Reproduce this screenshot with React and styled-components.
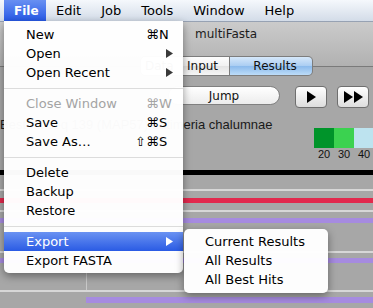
import styled, { createGlobalStyle } from "styled-components";

const GlobalStyle = createGlobalStyle`
  html, body {
    margin: 0;
    padding: 0;
  }
  body {
    width: 373px;
    height: 308px;
    overflow: hidden;
    background: #a7a7a7;
    font-family: "DejaVu Sans", sans-serif;
  }
`;

const Screen = styled.div`
  position: relative;
  width: 373px;
  height: 308px;
  overflow: hidden;
  display: flex;
  flex-direction: column;
  background: #a7a7a7;
`;

/* ---- menu bar ---- */

const MenuBar = styled.div`
  flex: none;
  height: 21px;
  display: flex;
  align-items: stretch;
  padding-left: 4px;
  background: linear-gradient(#f5f8fc, #d3dce8);
  border-bottom: 1px solid #97a2b3;
  font-size: 13px;
`;

const MenuTitle = styled.div`
  display: flex;
  align-items: center;
  box-sizing: border-box;
  width: ${(p) => (p.$width ? `${p.$width}px` : "auto")};
  padding: 0 10px;
  color: ${(p) => (p.$open ? "#fff" : "#000")};
  font-weight: ${(p) => (p.$open ? "bold" : "normal")};
  font-size: ${(p) => (p.$open ? "12px" : "13px")};
  background: ${(p) =>
    p.$open ? "linear-gradient(#6890f2, #2759e6)" : "transparent"};
`;

/* ---- window behind the menu ---- */

const AppWindow = styled.div`
  flex: 1;
  display: flex;
  flex-direction: column;
  background: linear-gradient(#cbcbcb 0, #b1b1b1 44px, #a7a7a7 44px);
`;

const TitleBar = styled.div`
  height: 24px;
  display: flex;
  align-items: center;
  padding-left: 195px;
  font-size: 12px;
  color: #1c1c1c;
`;

const TabRow = styled.div`
  height: 20px;
  margin-top: 10px;
  display: flex;
  align-items: center;
`;

const TabLine = styled.div`
  flex: ${(p) => (p.$grow ? 1 : "none")};
  width: ${(p) => (p.$grow ? "auto" : "140px")};
  height: 1px;
  background: #7a7a7a;
`;

const Segments = styled.div`
  display: flex;
  height: 20px;
`;

const Segment = styled.div`
  box-sizing: border-box;
  width: ${(p) => p.$width}px;
  height: 20px;
  display: flex;
  align-items: center;
  justify-content: ${(p) => (p.$selected ? "center" : "flex-start")};
  padding-left: ${(p) => (p.$selected ? "8px" : "4px")};
  font-size: 12px;
  color: #111;
  border: 1px solid #7d7d7d;
  border-left-width: ${(p) => (p.$first ? "1px" : "0")};
  border-radius: ${(p) =>
    p.$first ? "5px 0 0 5px" : p.$last ? "0 5px 5px 0" : "0"};
  background: ${(p) =>
    p.$selected
      ? "linear-gradient(#d6e8fa 0%, #aacdf2 50%, #8bbaec 51%, #bcdcf8 100%)"
      : "linear-gradient(#fdfdfd 0%, #f1f1f1 50%, #e3e3e3 51%, #f6f6f6 100%)"};
`;

const ControlRow = styled.div`
  margin-top: 10px;
  display: flex;
  align-items: flex-start;
  padding-left: 168px;
`;

const PillButton = styled.div`
  box-sizing: border-box;
  width: 112px;
  height: 19px;
  display: flex;
  align-items: center;
  justify-content: center;
  font-size: 12px;
  color: #111;
  border: 1px solid #808080;
  border-radius: 10px;
  background: linear-gradient(#ffffff, #ececec);
`;

const SquareButton = styled.div`
  box-sizing: border-box;
  width: 32px;
  height: 22px;
  margin-left: ${(p) => p.$gap}px;
  display: flex;
  align-items: center;
  justify-content: center;
  border: 1px solid #6f6f6f;
  border-radius: 4px;
  background: linear-gradient(#ffffff, #dddddd);
`;

const InfoRow = styled.div`
  margin-top: 10px;
  display: flex;
  justify-content: space-between;
  align-items: flex-start;
`;

const InfoText = styled.div`
  height: 26px;
  font-family: "Liberation Sans", Arial, sans-serif;
  font-size: 13px;
  line-height: 13px;
  color: #1a1a1a;
  white-space: nowrap;
`;

const Legend = styled.div`
  margin-top: 10px;
  margin-right: -1px;
  display: grid;
  grid-template-columns: repeat(3, 20px);
`;

const Swatch = styled.div`
  height: 20px;
  background: ${(p) => p.$color};
`;

const SwatchLabel = styled.div`
  height: 12px;
  line-height: 12px;
  text-align: center;
  font-family: "Liberation Sans", Arial, sans-serif;
  font-size: 11px;
  color: #111;
`;

const Tracks = styled.div`
  margin-top: 10px;
  display: flex;
  flex-direction: column;
`;

const TrackBar = styled.div`
  height: ${(p) => p.$h}px;
  margin-top: ${(p) => p.$top || 0}px;
  margin-left: ${(p) => p.$indent || 0}px;
  background: ${(p) => p.$color};
`;

const TrackRule = styled.div`
  height: 2px;
  margin-top: ${(p) => p.$top}px;
  background: #d7d7d7;
`;

const TrackGap = styled.div`
  height: ${(p) => p.$h}px;
  margin-left: 86px;
  border-left: 1px solid #c9c9c9;
`;

/* ---- pulled-down menu ---- */

const DropMenu = styled.div`
  position: absolute;
  top: 21px;
  left: 4px;
  width: 179px;
  padding: 4px 0 3px;
  background: rgba(255, 255, 255, 0.975);
  border-radius: 0 0 5px 5px;
  box-shadow: 0 3px 9px rgba(0, 0, 0, 0.4);
  font-size: 13px;
`;

const SubMenu = styled.div`
  position: absolute;
  top: -3px;
  left: calc(100% + 1px);
  width: 144px;
  padding: 3px 0 4px;
  background: rgba(255, 255, 255, 0.975);
  border-radius: 5px;
  box-shadow: 0 3px 9px rgba(0, 0, 0, 0.4);
`;

const Item = styled.div`
  position: relative;
  height: 19px;
  display: flex;
  align-items: center;
  padding: 0 10px 0 ${(p) => p.$indent || 22}px;
  color: ${(p) => (p.$disabled ? "#a4a4a4" : p.$active ? "#fff" : "#000")};
  background: ${(p) =>
    p.$active ? "linear-gradient(#6a92f2, #2a5be4)" : "none"};
  white-space: nowrap;
`;

const Label = styled.span`
  flex: 1;
`;

const Mods = styled.span`
  text-align: right;
`;

const Key = styled.span`
  width: 14px;
`;

const Separator = styled.div`
  height: 1px;
  margin: 6px 0 5px;
  background: #dcdcdc;
`;

const Arrow = ({ color = "#3a3a3a" }) => (
  <svg width="7" height="9" viewBox="0 0 7 9">
    <polygon points="0,0 7,4.5 0,9" fill={color} />
  </svg>
);

const Play = ({ double }) => (
  <svg width={double ? 19 : 9} height="12" viewBox={double ? "0 0 19 12" : "0 0 9 12"}>
    <polygon points="0,0 9,6 0,12" fill="#000" />
    {double && <polygon points="10,0 19,6 10,12" fill="#000" />}
  </svg>
);

const MenuItem = ({ label, mods, keyName, disabled, submenu, active, children }) => (
  <Item $disabled={disabled} $active={active}>
    <Label>{label}</Label>
    {keyName && (
      <>
        <Mods>{mods}</Mods>
        <Key>{keyName}</Key>
      </>
    )}
    {submenu && <Arrow color={active ? "#fff" : "#3a3a3a"} />}
    {children}
  </Item>
);

const menuBarItems = ["Edit", "Job", "Tools", "Window", "Help"];

const legend = [
  { color: "#00942a", label: "20" },
  { color: "#3bd250", label: "30" },
  { color: "#bde3ef", label: "40" },
];

const App = () => {
  return (
    <Screen>
      <GlobalStyle />
      <MenuBar>
        <MenuTitle $open $width={42}>File</MenuTitle>
        {menuBarItems.map((name) => (
          <MenuTitle key={name}>{name}</MenuTitle>
        ))}
      </MenuBar>

      <AppWindow>
        <TitleBar>multiFasta</TitleBar>
        <TabRow>
          <TabLine />
          <Segments>
            <Segment $first $width={43}>Data</Segment>
            <Segment $width={47}>Input</Segment>
            <Segment $last $selected $width={83}>Results</Segment>
          </Segments>
          <TabLine $grow />
        </TabRow>
        <ControlRow>
          <PillButton>Jump</PillButton>
          <SquareButton $gap={15}>
            <Play />
          </SquareButton>
          <SquareButton $gap={10}>
            <Play double />
          </SquareButton>
        </ControlRow>
        <InfoRow>
          <InfoText>Best hit seq 139 (MAP57) Latimeria chalumnae</InfoText>
          <Legend>
            {legend.map((l) => (
              <Swatch key={l.label} $color={l.color} />
            ))}
            {legend.map((l) => (
              <SwatchLabel key={l.label}>{l.label}</SwatchLabel>
            ))}
          </Legend>
        </InfoRow>
        <Tracks>
          <TrackBar $h={5} $color="#000" />
          <TrackRule $top={14} />
          <TrackBar $h={5} $top={7} $color="#e2294d" />
          <TrackRule $top={7} />
          <TrackBar $h={5} $top={6} $color="#a68be0" />
          <TrackRule $top={28} />
          <TrackBar $h={5} $top={5} $color="#a68be0" />
          <TrackGap $h={27} />
          <TrackRule $top={0} />
          <TrackBar $h={6} $top={5} $indent={86} $color="#a68be0" />
        </Tracks>
      </AppWindow>

      <DropMenu>
        <MenuItem label="New" mods="⌘" keyName="N" />
        <MenuItem label="Open" submenu />
        <MenuItem label="Open Recent" submenu />
        <Separator />
        <MenuItem label="Close Window" mods="⌘" keyName="W" disabled />
        <MenuItem label="Save" mods="⌘" keyName="S" />
        <MenuItem label="Save As…" mods="⇧⌘" keyName="S" />
        <Separator />
        <MenuItem label="Delete" />
        <MenuItem label="Backup" />
        <MenuItem label="Restore" />
        <Separator />
        <MenuItem label="Export" submenu active>
          <SubMenu>
            <Item $indent={21}>Current Results</Item>
            <Item $indent={21}>All Results</Item>
            <Item $indent={21}>All Best Hits</Item>
          </SubMenu>
        </MenuItem>
        <MenuItem label="Export FASTA" />
      </DropMenu>
    </Screen>
  );
};

export default App;
